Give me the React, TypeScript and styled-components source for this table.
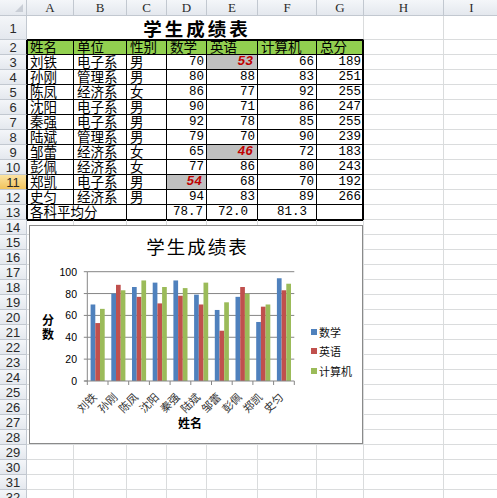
import React from "react";
import styled, { createGlobalStyle, css } from "styled-components";

const Global = createGlobalStyle`
  html, body { margin: 0; padding: 0; background: #fff; overflow: hidden; }
  body { width: 497px; height: 498px; font-family: "Noto Sans CJK SC", "Liberation Sans", sans-serif; }
`;

const CJK = `"Noto Sans CJK SC", "Liberation Sans", sans-serif`;
const MONO = `"Liberation Mono", "Noto Sans CJK SC", monospace`;
const GRID = "#dadcdd";

const COLS = ["A", "B", "C", "D", "E", "F", "G", "H", "I"];
const WIDTHS = [47, 53, 40, 40, 51, 59, 47, 80, 56];

type Rec = { name: string; unit: string; sex: string; math: number; eng: number; cs: number };
const DATA: Rec[] = [
  { name: "刘铁", unit: "电子系", sex: "男", math: 70, eng: 53, cs: 66 },
  { name: "孙刚", unit: "管理系", sex: "男", math: 80, eng: 88, cs: 83 },
  { name: "陈凤", unit: "经济系", sex: "女", math: 86, eng: 77, cs: 92 },
  { name: "沈阳", unit: "电子系", sex: "男", math: 90, eng: 71, cs: 86 },
  { name: "秦强", unit: "电子系", sex: "男", math: 92, eng: 78, cs: 85 },
  { name: "陆斌", unit: "管理系", sex: "男", math: 79, eng: 70, cs: 90 },
  { name: "邹蕾", unit: "经济系", sex: "女", math: 65, eng: 46, cs: 72 },
  { name: "彭佩", unit: "经济系", sex: "女", math: 77, eng: 86, cs: 80 },
  { name: "郑凯", unit: "电子系", sex: "男", math: 54, eng: 68, cs: 70 },
  { name: "史匀", unit: "经济系", sex: "男", math: 94, eng: 83, cs: 89 },
];

const Sheet = styled.div`
  position: relative;
  display: grid;
  grid-template-columns: 27px ${WIDTHS.map((w) => `${w}px`).join(" ")};
  grid-template-rows: 16px 24px repeat(31, 15px);
  width: 497px;
  height: 498px;
  overflow: hidden;
`;

const Corner = styled.div`
  position: relative;
  box-sizing: border-box;
  background: linear-gradient(#f4f6f9, #e4e8ee);
  border-right: 1px solid #c2c8d0;
  border-bottom: 1px solid #c2c8d0;
  &::after {
    content: "";
    position: absolute;
    right: 3px;
    bottom: 3px;
    border-left: 8px solid transparent;
    border-bottom: 8px solid #c9ced6;
  }
`;

const HeadCell = styled.div<{ $sel?: boolean; $edge?: boolean }>`
  box-sizing: border-box;
  background: ${(p) => (p.$sel ? "linear-gradient(#fbe3a2, #f2c35c)" : "linear-gradient(#f4f6f9, #e4e8ee)")};
  border-right: 1px solid ${(p) => (p.$edge ? "#000" : "#c2c8d0")};
  border-bottom: 1px solid #c2c8d0;
  display: flex;
  align-items: center;
  justify-content: center;
  font: 13px "Liberation Serif", serif;
  color: #2a2a2a;
`;

const RowHead = styled(HeadCell)`
  font: 13px "Liberation Sans", sans-serif;
  padding-top: 1px;
`;

type Align = "l" | "r" | "c";

const Cell = styled.div<{
  $t?: boolean;
  $tb?: boolean;
  $bg?: string;
  $align?: Align;
  $pr?: number;
  $span?: number;
  $eT?: boolean;
  $eL?: boolean;
  $eR?: boolean;
}>`
  box-sizing: border-box;
  min-width: 0;
  border-right: 1px solid ${(p) => (p.$t ? "#000" : GRID)};
  border-bottom: 1px solid ${(p) => (p.$t || p.$tb ? "#000" : GRID)};
  background: ${(p) => p.$bg || "#fff"};
  display: flex;
  align-items: flex-end;
  justify-content: ${(p) => (p.$align === "r" ? "flex-end" : p.$align === "c" ? "center" : "flex-start")};
  padding: 0 ${(p) => (p.$pr ?? 2)}px 0 3px;
  font-family: ${CJK};
  font-size: 13.5px;
  line-height: 15px;
  color: #000;
  white-space: nowrap;
  ${(p) => p.$span && css`grid-column: span ${p.$span};`}
  box-shadow: ${(p) =>
    [p.$eT && "inset 0 1px 0 #000", p.$eL && "inset 1px 0 0 #000", p.$eR && "inset -1px 0 0 #000"]
      .filter(Boolean)
      .join(", ") || "none"};
`;

const TitleCell = styled(Cell)`
  justify-content: center;
  align-items: flex-end;
  font-size: 18.5px;
  font-weight: 700;
  letter-spacing: 3px;
  line-height: 22px;
  padding-left: 6px;
`;

const Num = styled.span<{ $hi?: boolean }>`
  font-family: ${MONO};
  font-size: 12.5px;
  line-height: 14px;
  ${(p) =>
    p.$hi &&
    css`
      color: #c00000;
      font-weight: 700;
      font-style: italic;
      font-size: 13px;
    `}
`;

/* ---------- chart ---------- */

const Chart = styled.div`
  position: absolute;
  left: 29px;
  top: 225px;
  width: 334px;
  height: 219px;
  box-sizing: border-box;
  border: 1px solid #8a8a8a;
  background: #fff;
  display: grid;
  grid-template-columns: 30px 240px 1fr;
  grid-template-rows: 39px 150px 1fr;
  z-index: 3;
  font-family: ${CJK};
`;

const ChartTitle = styled.div`
  grid-column: 1 / -1;
  display: flex;
  align-items: center;
  justify-content: center;
  padding-left: 3px;
  font-size: 18.5px;
  letter-spacing: 2px;
  color: #000;
`;

const AxisTitleY = styled.div`
  padding: 48px 0 0 12px;
  font-size: 12px;
  font-weight: 700;
  line-height: 14px;
  color: #000;
`;

const PlotSvg = styled.svg`
  display: block;
  overflow: visible;
`;

const Legend = styled.div`
  display: flex;
  flex-direction: column;
  padding: 57px 0 0 11px;
`;

const LegendItem = styled.div`
  display: flex;
  align-items: center;
  gap: 2px;
  height: 19.5px;
  font-size: 11px;
  color: #111;
`;

const Swatch = styled.span<{ $c: string }>`
  width: 6px;
  height: 6px;
  background: ${(p) => p.$c};
`;

const AxisTitleX = styled.div`
  grid-column: 2;
  padding-left: 20px;
  text-align: center;
  font-size: 12px;
  font-weight: 700;
  line-height: 16px;
  color: #000;
`;

const SERIES = [
  { key: "math" as const, label: "数学", color: "#4f81bd" },
  { key: "eng" as const, label: "英语", color: "#c0504d" },
  { key: "cs" as const, label: "计算机", color: "#9bbb59" },
];

function Plot() {
  const x0 = 27.3;
  const x1 = 234.3;
  const yb = 116;
  const yt = 6.7;
  const k = (yb - yt) / 100;
  const cw = (x1 - x0) / DATA.length;
  const bw = 4.7;
  const off = (cw - bw * 3) / 2;
  return (
    <PlotSvg width={240} height={150} viewBox="0 0 240 150">
      {[20, 40, 60, 80, 100].map((v) => (
        <line key={v} x1={x0} x2={x1} y1={yb - v * k} y2={yb - v * k} stroke="#868686" strokeWidth={1} />
      ))}
      {DATA.map((d, i) =>
        SERIES.map((s, j) => {
          const h = d[s.key] * k;
          return <rect key={`${i}-${j}`} x={x0 + i * cw + off + j * bw} y={yb - h} width={bw} height={h} fill={s.color} />;
        })
      )}
      <line x1={x0} x2={x0} y1={yt} y2={yb} stroke="#868686" strokeWidth={1} />
      <line x1={x0 - 3} x2={x1} y1={yb} y2={yb} stroke="#868686" strokeWidth={1} />
      {[0, 20, 40, 60, 80, 100].map((v) => (
        <g key={v}>
          <line x1={x0 - 3.5} x2={x0} y1={yb - v * k} y2={yb - v * k} stroke="#868686" />
          <text
            x={17}
            y={yb - v * k}
            textAnchor="end"
            dominantBaseline="central"
            fontSize={10.5}
            fontFamily='"Liberation Sans", sans-serif'
            fill="#000"
          >
            {v}
          </text>
        </g>
      ))}
      {Array.from({ length: DATA.length + 1 }).map((_, i) => (
        <line key={i} x1={x0 + i * cw} x2={x0 + i * cw} y1={yb} y2={yb + 4} stroke="#868686" />
      ))}
      {DATA.map((d, i) => (
        <text
          key={d.name}
          transform={`translate(${x0 + i * cw + cw / 2} ${yb + 17}) rotate(-45)`}
          textAnchor="end"
          fontSize={11}
          fontFamily={CJK}
          fill="#333"
        >
          {d.name}
        </text>
      ))}
    </PlotSvg>
  );
}

function ScoreChart() {
  return (
    <Chart>
      <ChartTitle>学生成绩表</ChartTitle>
      <AxisTitleY>
        分<br />数
      </AxisTitleY>
      <Plot />
      <Legend>
        {SERIES.map((s) => (
          <LegendItem key={s.key}>
            <Swatch $c={s.color} />
            {s.label}
          </LegendItem>
        ))}
      </Legend>
      <AxisTitleX>姓名</AxisTitleX>
    </Chart>
  );
}

/* ---------- sheet ---------- */

const GREEN = "#92d050";
const GRAY = "#c0c0c0";

export default function App() {
  const rows: React.ReactNode[] = [];

  // column header
  rows.push(<Corner key="corner" />);
  COLS.forEach((c) => rows.push(<HeadCell key={`h-${c}`}>{c}</HeadCell>));

  // row 1
  rows.push(<RowHead key="r1">1</RowHead>);
  rows.push(
    <TitleCell key="title" $span={7} $tb>
      学生成绩表
    </TitleCell>
  );
  rows.push(<Cell key="1H" />, <Cell key="1I" />);

  // row 2 header
  rows.push(
    <RowHead key="r2" $edge>
      2
    </RowHead>
  );
  ["姓名", "单位", "性别", "数学", "英语", "计算机", "总分"].forEach((h, i) =>
    rows.push(
      <Cell key={`2-${i}`} $t $bg={GREEN} $eT $eL={i === 0} $eR={i === 6}>
        {h}
      </Cell>
    )
  );
  rows.push(<Cell key="2H" />, <Cell key="2I" />);

  DATA.forEach((d, r) => {
    const rn = r + 3;
    rows.push(
      <RowHead key={`r${rn}`} $edge $sel={rn === 11}>
        {rn}
      </RowHead>
    );
    rows.push(
      <Cell key={`${rn}a`} $t $eL>
        {d.name}
      </Cell>
    );
    rows.push(
      <Cell key={`${rn}b`} $t>
        {d.unit}
      </Cell>
    );
    rows.push(
      <Cell key={`${rn}c`} $t>
        {d.sex}
      </Cell>
    );
    [d.math, d.eng, d.cs].forEach((v, j) => {
      const hi = v < 60;
      rows.push(
        <Cell key={`${rn}n${j}`} $t $align="r" $bg={hi ? GRAY : undefined} $pr={hi ? 4 : 2}>
          <Num $hi={hi}>{v}</Num>
        </Cell>
      );
    });
    rows.push(
      <Cell key={`${rn}g`} $t $align="r" $eR>
        <Num>{d.math + d.eng + d.cs}</Num>
      </Cell>
    );
    rows.push(<Cell key={`${rn}H`} />, <Cell key={`${rn}I`} />);
  });

  // row 13 averages
  const avg = (k: "math" | "eng" | "cs") => (DATA.reduce((s, d) => s + d[k], 0) / DATA.length).toFixed(1);
  rows.push(
    <RowHead key="r13" $edge>
      13
    </RowHead>
  );
  rows.push(
    <Cell key="13ab" $t $span={2} $eL>
      各科平均分
    </Cell>
  );
  rows.push(<Cell key="13c" $t />);
  rows.push(
    <Cell key="13d" $t $align="c" $pr={0}>
      <Num>{avg("math")}</Num>
    </Cell>
  );
  rows.push(
    <Cell key="13e" $t $align="r" $pr={9}>
      <Num>{avg("eng")}</Num>
    </Cell>
  );
  rows.push(
    <Cell key="13f" $t $align="r" $pr={9}>
      <Num>{avg("cs")}</Num>
    </Cell>
  );
  rows.push(<Cell key="13g" $t $eR />);
  rows.push(<Cell key="13H" />, <Cell key="13I" />);

  // rows 14..32 empty
  for (let rn = 14; rn <= 32; rn++) {
    rows.push(<RowHead key={`r${rn}`}>{rn}</RowHead>);
    COLS.forEach((c, i) => rows.push(<Cell key={`${rn}${c}`} $eT={rn === 14 && i < 7} />));
  }

  return (
    <>
      <Global />
      <Sheet>
        {rows}
        <ScoreChart />
      </Sheet>
    </>
  );
}
